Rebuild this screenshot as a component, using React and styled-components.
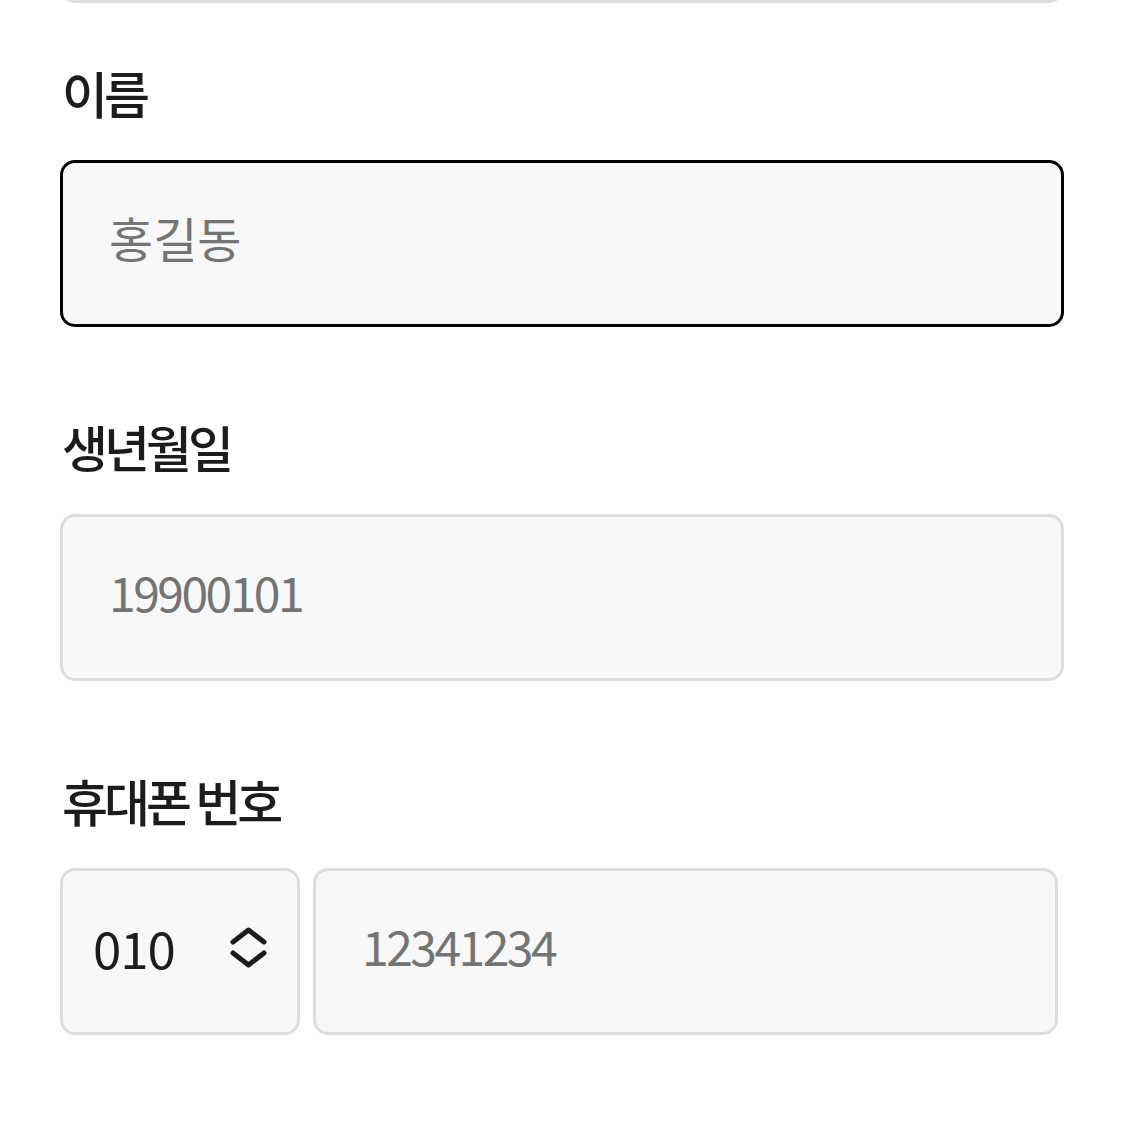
import React from 'react';
import styled, { createGlobalStyle } from 'styled-components';

const GlobalStyle = createGlobalStyle`
  body {
    margin: 0;
    background: #ffffff;
    font-family: "Noto Sans CJK KR", "Noto Sans", sans-serif;
    overflow: hidden;
  }
`;

const Form = styled.div`
  display: flex;
  flex-direction: column;
  padding: 0 61px 0 60px;
`;

const Field = styled.div`
  display: flex;
  flex-direction: column;
  margin-top: ${props => props.first ? '57px' : '87px'};
`;

const Label = styled.label`
  font-size: 50px;
  line-height: 1.3;
  font-weight: 500;
  color: #1c1c1c;
  letter-spacing: -4px;
  padding-left: 2px;
  margin-bottom: 35px;
`;

const Input = styled.input`
  box-sizing: border-box;
  width: 100%;
  height: 167px;
  padding: 0 46px 14px;
  background: #f8f8f8;
  border: 3px solid ${props => props.focused ? '#000000' : '#dddddd'};
  border-radius: 15px;
  font-family: inherit;
  font-size: 48px;
  color: #222222;
  letter-spacing: ${props => props.numeric ? '-2.5px' : '0px'};
  outline: none;
  flex: ${props => props.grow ? 1 : 'none'};

  &::placeholder {
    color: #747474;
  }
`;

const Stub = styled.div`
  box-sizing: border-box;
  height: 167px;
  margin-top: -164px;
  background: #f8f8f8;
  border: 3px solid #dddddd;
  border-radius: 15px;
`;

const PhoneRow = styled.div`
  display: flex;
  gap: 13px;
  padding-right: 6px;
`;

const Select = styled.div`
  box-sizing: border-box;
  width: 240px;
  height: 167px;
  display: flex;
  align-items: center;
  justify-content: space-between;
  padding: 0 28px 10px 30px;
  background: #f8f8f8;
  border: 3px solid #dddddd;
  border-radius: 15px;
  font-size: 51px;
  color: #1c1c1c;
  letter-spacing: -1px;
`;

const Chevrons = () => (
  <svg width="40" height="44" viewBox="0 0 40 44" fill="none">
    <path d="M4 17 L19.5 5 L35 17" stroke="#1c1c1c" strokeWidth="5" strokeLinecap="round" strokeLinejoin="round" />
    <path d="M4 28 L19.5 40 L35 28" stroke="#1c1c1c" strokeWidth="5" strokeLinecap="round" strokeLinejoin="round" />
  </svg>
);

export default function App() {
  return (
    <>
      <GlobalStyle />
      <Form>
        <Stub />
        <Field first>
          <Label>이름</Label>
          <Input focused placeholder="홍길동" />
        </Field>
        <Field>
          <Label>생년월일</Label>
          <Input numeric placeholder="19900101" />
        </Field>
        <Field>
          <Label>휴대폰 번호</Label>
          <PhoneRow>
            <Select>
              <span>010</span>
              <Chevrons />
            </Select>
            <Input grow numeric placeholder="12341234" />
          </PhoneRow>
        </Field>
      </Form>
    </>
  );
}
